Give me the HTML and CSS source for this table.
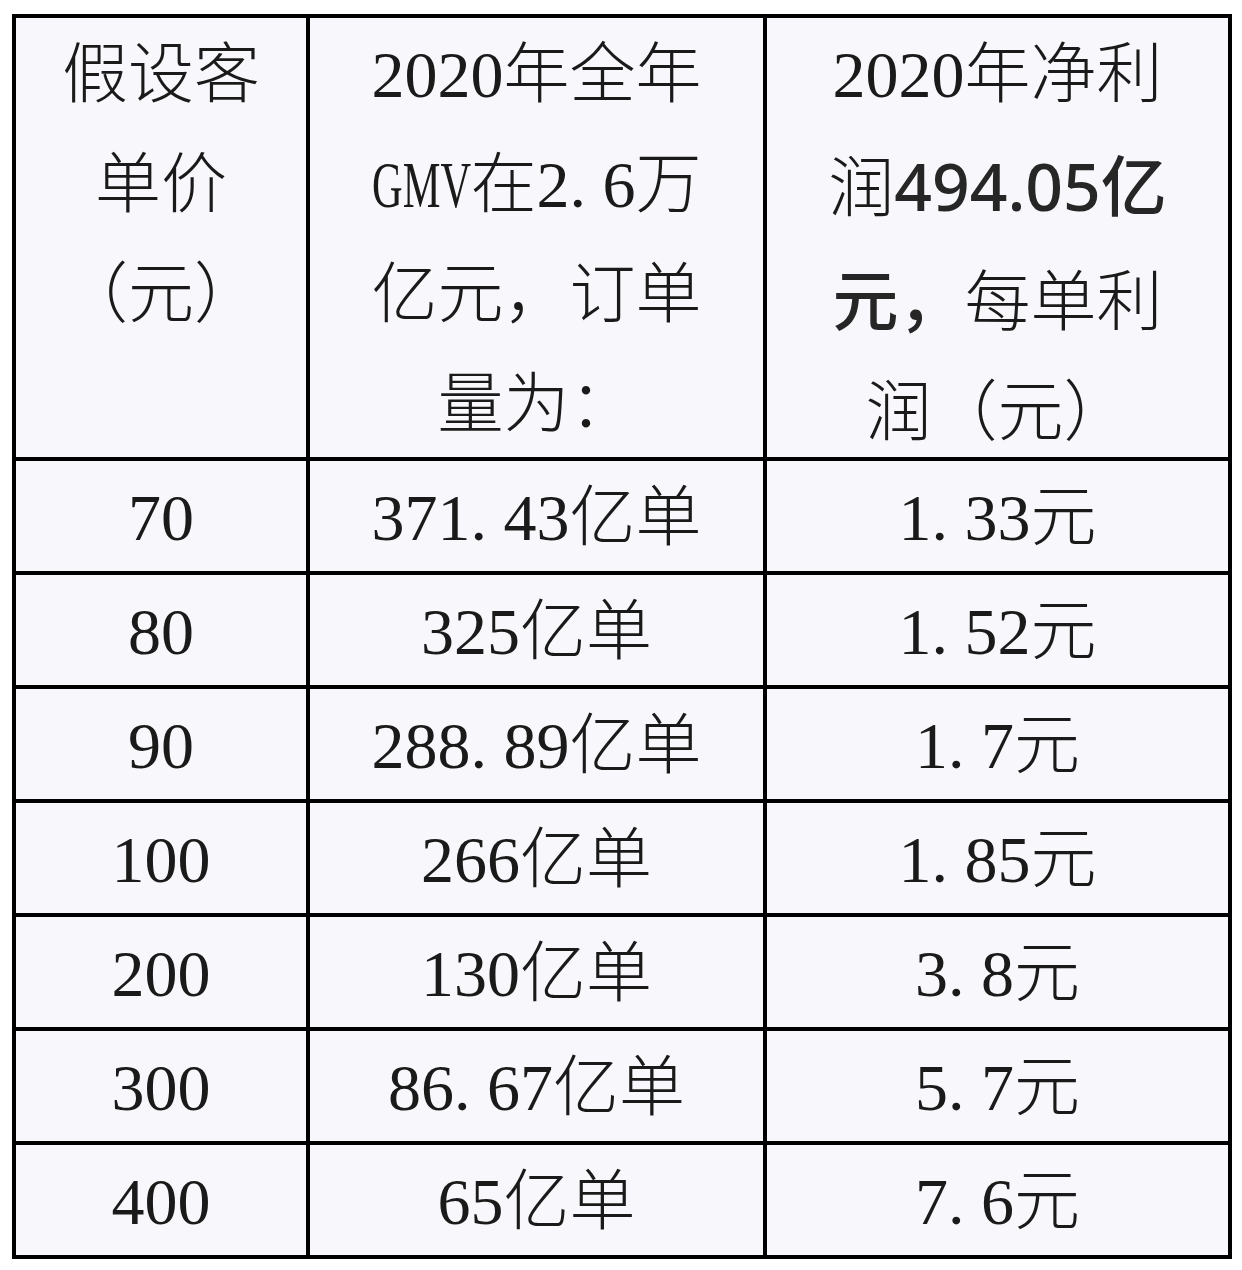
FILE: index.html
```html
<!DOCTYPE html>
<html lang="zh-CN">
<head>
<meta charset="utf-8">
<title>客单价与每单利润</title>
<link rel="stylesheet" href="styles.css">
</head>
<body>
<div class="table">
  <div class="cell head">假设客<br>单价<br><span class="po">（</span>元<span class="pc">）</span></div>
  <div class="cell head">2020年全年<br><span class="narrow">GMV</span>在2<span class="dot">.</span>6万<br>亿元，订单<br>量为：</div>
  <div class="cell head">2020年净利<br>润<span class="sans">494.05亿</span><br><span class="sans">元，</span>每单利<br>润<span class="po">（</span>元<span class="pc">）</span></div>

  <div class="cell">70</div>
  <div class="cell">371<span class="dot">.</span>43亿单</div>
  <div class="cell">1<span class="dot">.</span>33元</div>

  <div class="cell">80</div>
  <div class="cell">325亿单</div>
  <div class="cell">1<span class="dot">.</span>52元</div>

  <div class="cell">90</div>
  <div class="cell">288<span class="dot">.</span>89亿单</div>
  <div class="cell">1<span class="dot">.</span>7元</div>

  <div class="cell">100</div>
  <div class="cell">266亿单</div>
  <div class="cell">1<span class="dot">.</span>85元</div>

  <div class="cell">200</div>
  <div class="cell">130亿单</div>
  <div class="cell">3<span class="dot">.</span>8元</div>

  <div class="cell">300</div>
  <div class="cell">86<span class="dot">.</span>67亿单</div>
  <div class="cell">5<span class="dot">.</span>7元</div>

  <div class="cell">400</div>
  <div class="cell">65亿单</div>
  <div class="cell">7<span class="dot">.</span>6元</div>
</div>
</body>
</html>
```
FILE: styles.css
```css
html, body {
  margin: 0;
  padding: 0;
  background: #ffffff;
}

.table {
  display: grid;
  width: 1220px;
  box-sizing: border-box;
  margin: 14px 0 0 12px;
  padding: 4px;
  gap: 4px;
  background: #000000;
  grid-template-columns: 290px 453px 461px;
  grid-template-rows: 439px repeat(7, 110px);
}

.cell {
  background: #f8f8fc;
  color: #1a1a1a;
  font-family: "Liberation Serif", "Noto Sans CJK SC", serif;
  font-size: 66px;
  font-weight: 300;
  line-height: 110px;
  text-align: center;
  white-space: nowrap;
  text-spacing-trim: space-all;
  display: flex;
  align-items: center;
  justify-content: center;
  padding-top: 3px;
  box-sizing: border-box;
}

.cell.head {
  display: block;
  padding-top: 2px;
}

.po,
.pc {
  display: inline-block;
  width: 1em;
}

.po {
  text-align: right;
}

.pc {
  text-align: left;
}

.dot {
  padding-right: 0.25em;
}

.narrow {
  display: inline-block;
  width: 1.5em;
  text-align: left;
  transform-origin: left center;
  transform: scaleX(0.643);
}

.sans {
  font-family: "Noto Sans", "Noto Sans CJK SC", sans-serif;
  font-weight: 500;
  color: #262626;
}
```
